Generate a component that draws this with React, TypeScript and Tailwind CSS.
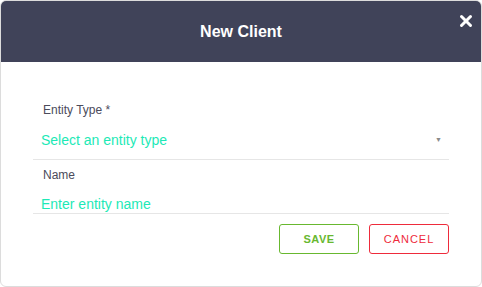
import { X } from "lucide-react";

export default function App() {
  return (
    <div className="w-[482px] h-[287px] bg-white font-['Liberation_Sans',Arial,sans-serif]">
      <div className="h-[287px] rounded-md border border-[#dcdcdc] overflow-hidden flex flex-col bg-white">
        <div className="h-[61px] shrink-0 bg-[#404359] relative flex items-center justify-center">
          <h2 className="text-white font-bold text-[16px]">New Client</h2>
          <button className="absolute right-[6px] top-[11px] text-white">
            <X size={18} strokeWidth={4} />
          </button>
        </div>

        <div className="px-[32px] pt-[40px]">
          <label className="block pl-[10px] text-[12px] text-[#4b4b5b] leading-[16px]">Entity Type *</label>
          <div className="flex items-center justify-between border-b border-[#e6e6e6] h-[42px] pt-[3px] pl-[8px] pr-[7px]">
            <span className="text-[14px] text-[#1de9b6] leading-[18px]">Select an entity type</span>
            <span className="text-[#8a8a8a] text-[7px]">▼</span>
          </div>

          <label className="block pl-[10px] mt-[7px] text-[12px] text-[#4b4b5b] leading-[16px]">Name</label>
          <div className="flex items-end border-b border-[#e6e6e6] h-[31px] pl-[8px]">
            <span className="text-[14px] text-[#1de9b6] leading-[18px]">Enter entity name</span>
          </div>

          <div className="flex justify-end gap-[10px] mt-[10px]">
            <button className="w-[80px] h-[30px] rounded-[3px] border border-[#68b82f] text-[#68b82f] text-[11px] font-bold tracking-[0.5px]">
              SAVE
            </button>
            <button className="w-[80px] h-[30px] rounded-[3px] border border-[#ee2b3b] text-[#ee2b3b] text-[11px] tracking-[1px]">
              CANCEL
            </button>
          </div>
        </div>
      </div>
    </div>
  );
}
